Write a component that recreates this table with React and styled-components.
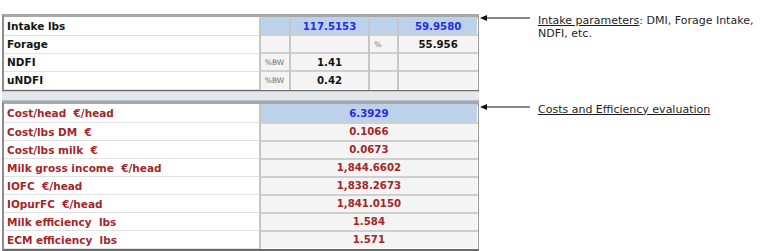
import React from 'react';
import styled, { createGlobalStyle } from 'styled-components';

const GlobalStyle = createGlobalStyle`
  html, body { margin: 0; padding: 0; background: #ffffff; }
  body { font-family: "DejaVu Sans", Verdana, sans-serif; }
`;

// styles
const Page = styled.div`
  width: 771px;
  height: 251px;
  display: flex;
  flex-direction: column;
  padding: 14px 0 0 2px;
  box-sizing: border-box;
`;

const Section = styled.div`
  display: flex;
  align-items: flex-start;
`;

const Panel = styled.div`
  width: 477px;
  box-sizing: border-box;
  border: 1px solid #9a9a9a;
  border-top: 3px solid #a8a8a8;
  border-left: 2px solid #8c8c8c;
  border-bottom-width: ${(p) => (p.$last ? '2px' : '1px')};
  border-bottom-color: #6a6a6a;
  background: #ffffff;
`;

const Band = styled.div`
  width: 477px;
  height: 13px;
  box-sizing: border-box;
  background: #e3e7ec;
  border-top: 1px solid #c4ccd6;
  border-bottom: 1px solid #b7c2cf;
`;

const Table = styled.table`
  border-collapse: collapse;
  table-layout: fixed;
  width: 100%;
`;

const Row = styled.tr`
  height: ${(p) => p.$h || 18}px;
`;

const Label = styled.td`
  width: 251px;
  padding: 0 0 0 3px;
  font-size: 10.5px;
  font-weight: bold;
  color: ${(p) => (p.$red ? '#a3262a' : '#141414')};
  border-bottom: 1px solid #e2e2e2;
  white-space: pre;
  background: #ffffff;
`;

const Cell = styled.td`
  width: ${(p) => p.$w}px;
  box-sizing: border-box;
  padding: 0;
  font-size: ${(p) => (p.$unit ? '7.5px' : '10.2px')};
  font-weight: ${(p) => (p.$unit ? 'normal' : 'bold')};
  color: ${(p) => (p.$blue ? '#2a2ae6' : p.$red ? '#a3262a' : p.$unit ? '#707070' : '#141414')};
  background: ${(p) => (p.$hl ? '#bcd2ea' : '#f4f4f4')};
  border-left: 2px solid #c6c6c6;
  border-top: 2px solid ${(p) => (p.$hl ? '#bcd2ea' : '#cfcfcf')};
  border-bottom: 1px solid #ffffff;
  border-right: 1px solid #ffffff;
  text-align: ${(p) => (p.$unit ? 'left' : 'center')};
  padding-left: ${(p) => (p.$unit ? '4px' : '0')};
`;

const Note = styled.div`
  display: flex;
  align-items: flex-start;
  gap: 8px;
  margin-left: 1px;
  margin-top: ${(p) => p.$top}px;
  font-family: "DejaVu Sans", Verdana, sans-serif;
  font-size: 11px;
  line-height: 13px;
  color: #1e1e1e;
`;

const Arrow = styled.svg`
  flex: none;
  margin-top: 0;
`;

const Under = styled.span`
  text-decoration: underline;
`;

// component
const LeftArrow = () => (
  <Arrow width="50" height="8" viewBox="0 0 50 8">
    <line x1="5" y1="4" x2="50" y2="4" stroke="#111" strokeWidth="1.2" />
    <polygon points="0,4 7,1 7,7" fill="#111" />
  </Arrow>
);

const costRows = [
  ['Cost/head  \u20ac/head', '6.3929', true],
  ['Cost/lbs DM  \u20ac', '0.1066'],
  ['Cost/lbs milk  \u20ac', '0.0673'],
  ['Milk gross income  \u20ac/head', '1,844.6602'],
  ['IOFC  \u20ac/head', '1,838.2673'],
  ['IOpurFC  \u20ac/head', '1,841.0150'],
  ['Milk efficiency  lbs', '1.584'],
  ['ECM efficiency  lbs', '1.571'],
];

const App = () => (
  <>
    <GlobalStyle />
    <Page>
      <Section>
        <Panel>
          <Table>
            <tbody>
              <Row $h={17}>
                <Label>Intake lbs</Label>
                <Cell $w={30} $hl />
                <Cell $w={79} $hl $blue>117.5153</Cell>
                <Cell $w={29} $hl />
                <Cell $w={79} $hl $blue>59.9580</Cell>
              </Row>
              <Row>
                <Label>Forage</Label>
                <Cell $w={30} />
                <Cell $w={79} />
                <Cell $w={29} $unit>%</Cell>
                <Cell $w={79}>55.956</Cell>
              </Row>
              <Row>
                <Label>NDFI</Label>
                <Cell $w={30} $unit>%BW</Cell>
                <Cell $w={79}>1.41</Cell>
                <Cell $w={29} />
                <Cell $w={79} />
              </Row>
              <Row>
                <Label>uNDFI</Label>
                <Cell $w={30} $unit>%BW</Cell>
                <Cell $w={79}>0.42</Cell>
                <Cell $w={29} />
                <Cell $w={79} />
              </Row>
            </tbody>
          </Table>
        </Panel>
        <Note $top={0}>
          <LeftArrow />
          <div>
            <Under>Intake parameters</Under>: DMI, Forage Intake,
            <br />
            NDFI, etc.
          </div>
        </Note>
      </Section>
      <Band />
      <Section>
        <Panel $last>
          <Table>
            <tbody>
              {costRows.map(([label, value, hl]) => (
                <Row key={label} $h={18}>
                  <Label $red>{label}</Label>
                  <Cell $w={217} $hl={hl} $blue={hl} $red={!hl}>
                    {value}
                  </Cell>
                </Row>
              ))}
            </tbody>
          </Table>
        </Panel>
        <Note $top={2}>
          <LeftArrow />
          <Under>Costs and Efficiency evaluation</Under>
        </Note>
      </Section>
    </Page>
  </>
);

export default App;
